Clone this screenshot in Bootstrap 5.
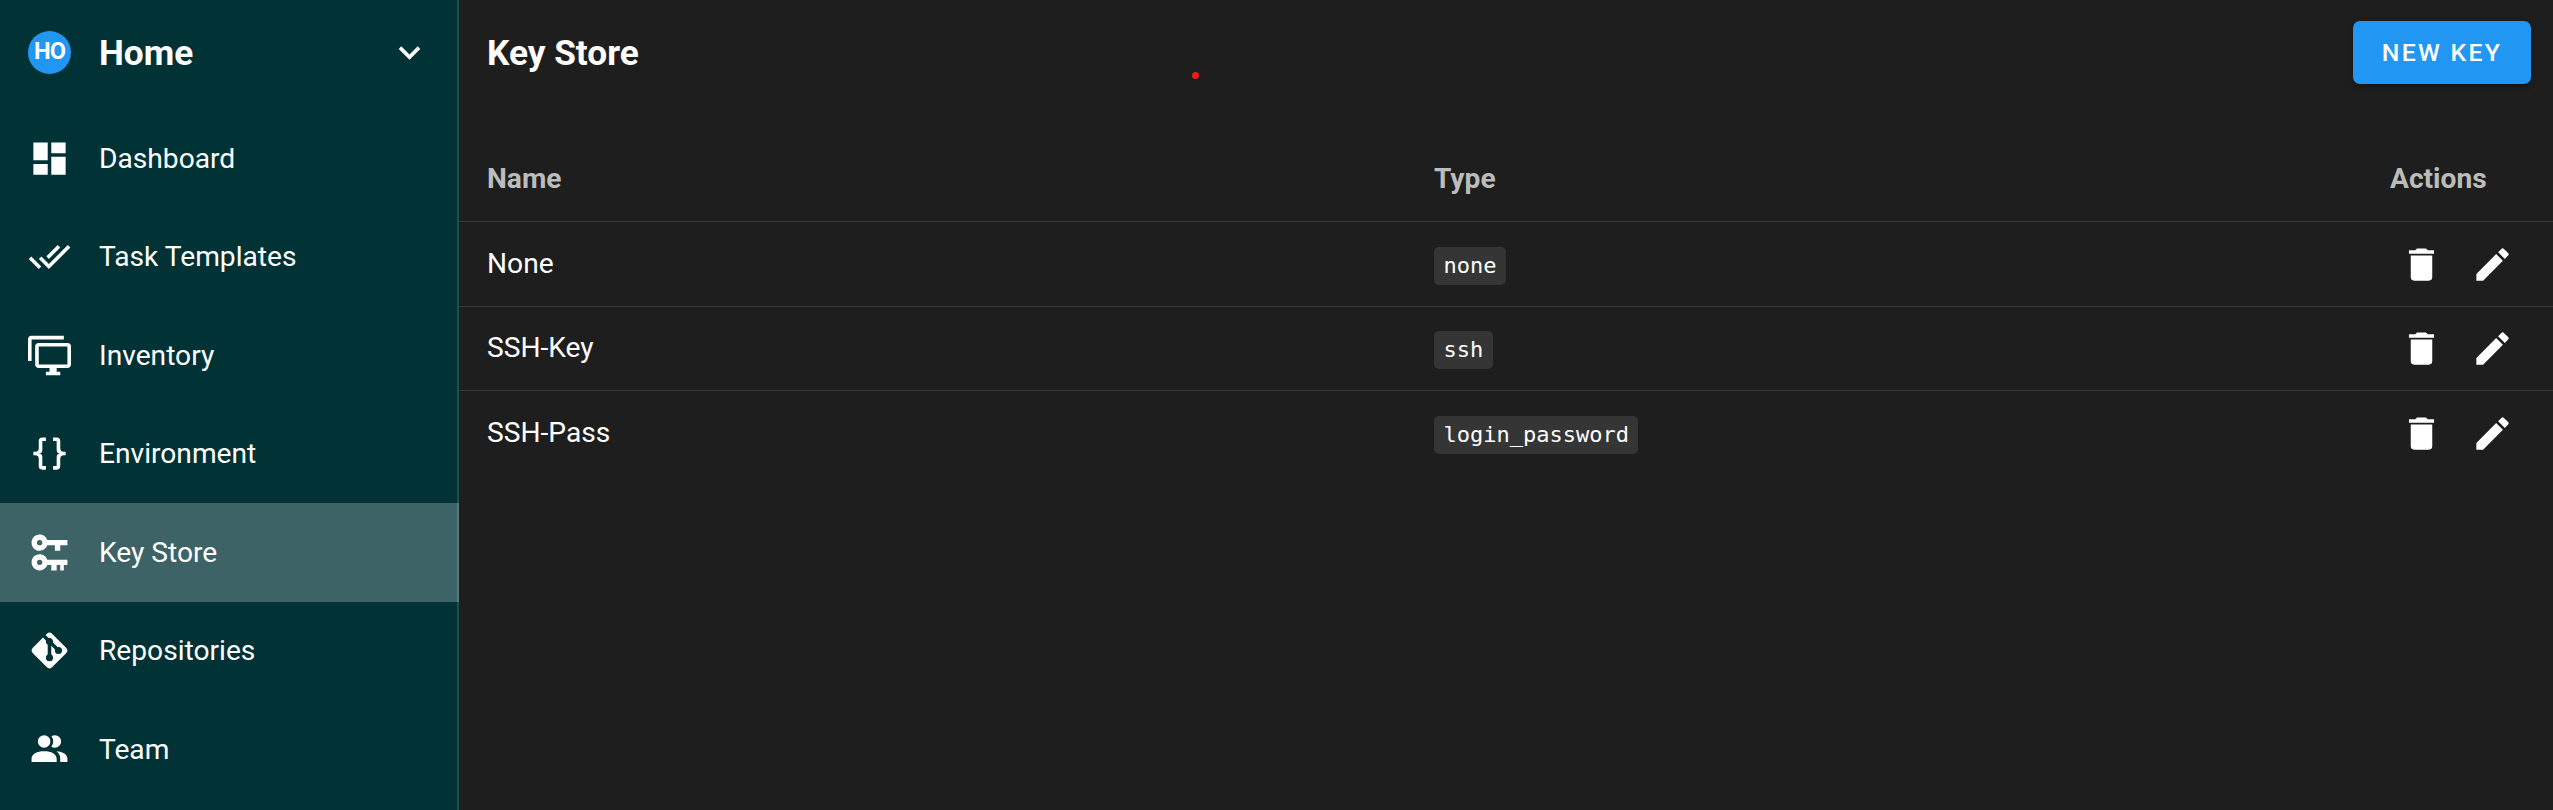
<!DOCTYPE html>
<html lang="en" data-bs-theme="dark">
<head>
<meta charset="utf-8">
<title>Key Store</title>
<meta name="viewport" content="width=device-width, initial-scale=1">
<link rel="stylesheet" href="https://cdn.jsdelivr.net/npm/bootstrap@5.3.0/dist/css/bootstrap.min.css">
<style>
  body { background: #1e1e1e; color: #fff; font-family: Roboto, sans-serif; font-size: 28.16px; line-height: 1.5; }
  svg { width: 43px; height: 43px; fill: currentColor; flex: none; display: block; }
  .side { width: 459px; background: #003236; box-shadow: inset -2px 0 rgba(255,255,255,.13); }
  .project { height: 105px; padding: 0 28px; margin-bottom: 4px; }
  .avatar-dot { width: 43px; height: 43px; background: #2196f3; font-size: 23.5px; font-weight: 700; letter-spacing: -1px; line-height: 1; padding-bottom: 2px; }
  .heading { font-size: 35.2px; font-weight: 700; padding-top: 1px; }
  .side .nav-link { height: 98.5px; padding: 1px 28px 0; gap: 28px; color: #fff; }
  .side .nav-link svg { margin-top: -1px; }
  .side .nav-link.active { background: rgba(255,255,255,.245); }
  .topbar { height: 105px; padding: 0 22px 0 28px; }
  .btn-key { width: 178px; height: 63px; padding: 0; border: 0; border-radius: 7px; background: #2196f3; color: #fff; font-size: 24.8px; font-weight: 500; letter-spacing: 2.3px;
    box-shadow: 0 5px 2px -4px rgba(0,0,0,.2), 0 3px 4px rgba(0,0,0,.14), 0 2px 9px rgba(0,0,0,.12); }
  .btn-key:hover { background: #2196f3; color: #fff; }
  .keys { margin-top: 32px; table-layout: fixed; border-collapse: separate; border-spacing: 0; --bs-table-bg: transparent; --bs-table-color: #fff; }
  .keys > :not(caption) > * > * { height: 85px; padding: 0 28px; border-bottom: 1px solid #393939; color: #fff; vertical-align: middle; }
  .keys > tbody > tr:nth-child(2) > td { height: 84px; }
  .keys > thead > tr > th { color: #bcbcbc; font-weight: 700; }
  .keys > tbody > tr:last-child > td { border-bottom: 0; }
  .keys code { display: block; width: fit-content; height: 38px; margin-top: 3px; padding: 0 9.5px; background: #353535; color: #fff; border-radius: 5px; font: 22px/38px "DejaVu Sans Mono", monospace; }
  .acts { gap: 28px; padding-left: 9.5px; }
  .red-dot { left: 1192px; top: 72px; width: 7px; height: 7px; background: #f01c1c; }
</style>
<script src="https://cdn.jsdelivr.net/npm/bootstrap@5.3.0/dist/js/bootstrap.bundle.min.js"></script>
</head>
<body>
<svg class="d-none">
  <symbol id="trash" viewBox="0 0 24 24"><path d="M19,4H15.5L14.5,3H9.5L8.5,4H5V6H19M6,19A2,2 0 0,0 8,21H16A2,2 0 0,0 18,19V7H6V19Z"/></symbol>
  <symbol id="pencil" viewBox="0 0 24 24"><path d="M20.71,7.04C21.1,6.65 21.1,6 20.71,5.63L18.37,3.29C18,2.9 17.35,2.9 16.96,3.29L15.12,5.12L18.87,8.87M3,17.25V21H6.75L17.81,9.93L14.06,6.18L3,17.25Z"/></symbol>
</svg>
<div class="d-flex vh-100 overflow-hidden">
  <aside class="side flex-shrink-0">
    <div class="project d-flex align-items-center">
      <span class="avatar-dot rounded-circle d-flex align-items-center justify-content-center">HO</span>
      <span class="heading flex-grow-1 ps-4 ms-1">Home</span>
      <svg viewBox="0 0 24 24"><path d="M7.41,8.58L12,13.17L16.59,8.58L18,10L12,16L6,10L7.41,8.58Z"/></svg>
    </div>
    <nav class="nav flex-column flex-nowrap">
      <a class="nav-link d-flex align-items-center" href="#"><svg viewBox="0 0 24 24"><path d="M13,3V9H21V3M13,21H21V11H13M3,21H11V15H3M3,13H11V3H3V13Z"/></svg>Dashboard</a>
      <a class="nav-link d-flex align-items-center" href="#"><svg viewBox="0 0 24 24"><path d="M0.41,13.41L6,19L7.41,17.58L1.83,12M22.24,5.58L11.66,16.17L7.5,12L6.07,13.41L11.66,19L23.66,7M18,7L16.59,5.58L10.24,11.93L11.66,13.34L18,7Z"/></svg>Task Templates</a>
      <a class="nav-link d-flex align-items-center" href="#"><svg viewBox="0 0 24 24"><path d="M22,17V7H6V17H22M22,5A2,2 0 0,1 24,7V17C24,18.11 23.1,19 22,19H16V21H18V23H10V21H12V19H6C4.89,19 4,18.11 4,17V7A2,2 0 0,1 6,5H22M2,3V15H0V3A2,2 0 0,1 2,1H20V3H2Z"/></svg>Inventory</a>
      <a class="nav-link d-flex align-items-center" href="#"><svg viewBox="0 0 24 24"><path d="M8,3A2,2 0 0,0 6,5V9A2,2 0 0,1 4,11H3V13H4A2,2 0 0,1 6,15V19A2,2 0 0,0 8,21H10V19H8V14A2,2 0 0,0 6,12A2,2 0 0,0 8,10V5H10V3M16,3A2,2 0 0,1 18,5V9A2,2 0 0,0 20,11H21V13H20A2,2 0 0,0 18,15V19A2,2 0 0,1 16,21H14V19H16V14A2,2 0 0,1 18,12A2,2 0 0,1 16,10V5H14V3H16Z"/></svg>Environment</a>
      <a class="nav-link active d-flex align-items-center" href="#"><svg viewBox="0 0 24 24"><path d="M6.5,2C8.46,2 10.13,3.25 10.74,5H22V8H18V11H15V8H10.74C10.13,9.75 8.46,11 6.5,11C4,11 2,9 2,6.5C2,4 4,2 6.5,2M6.5,5A1.5,1.5 0 0,0 5,6.5A1.5,1.5 0 0,0 6.5,8A1.5,1.5 0 0,0 8,6.5A1.5,1.5 0 0,0 6.5,5M6.5,13C8.46,13 10.13,14.25 10.74,16H22V19H20V22H18V19H16V22H13V19H10.74C10.13,20.75 8.46,22 6.5,22C4,22 2,20 2,17.5C2,15 4,13 6.5,13M6.5,16A1.5,1.5 0 0,0 5,17.5A1.5,1.5 0 0,0 6.5,19A1.5,1.5 0 0,0 8,17.5A1.5,1.5 0 0,0 6.5,16Z"/></svg>Key Store</a>
      <a class="nav-link d-flex align-items-center" href="#"><svg viewBox="0 0 24 24"><path d="M2.6,10.59L8.38,4.8L10.07,6.5C9.83,7.35 10.22,8.28 11,8.73V14.27C10.4,14.61 10,15.26 10,16A2,2 0 0,0 12,18A2,2 0 0,0 14,16C14,15.26 13.6,14.61 13,14.27V9.41L15.07,11.5C15,11.65 15,11.82 15,12A2,2 0 0,0 17,14A2,2 0 0,0 19,12A2,2 0 0,0 17,10C16.82,10 16.65,10 16.5,10.07L13.93,7.5C14.19,6.57 13.71,5.55 12.78,5.16C12.35,5 11.9,4.96 11.5,5.07L9.8,3.38L10.59,2.6C11.37,1.81 12.63,1.81 13.41,2.6L21.4,10.59C22.19,11.37 22.19,12.63 21.4,13.41L13.41,21.4C12.63,22.19 11.37,22.19 10.59,21.4L2.6,13.41C1.81,12.63 1.81,11.37 2.6,10.59Z"/></svg>Repositories</a>
      <a class="nav-link d-flex align-items-center" href="#"><svg viewBox="0 0 24 24"><path d="M16 17V19H2V17S2 13 9 13 16 17 16 17M12.5 7.5A3.5 3.5 0 1 0 9 11A3.5 3.5 0 0 0 12.5 7.5M15.94 13A5.32 5.32 0 0 1 18 17V19H22V17S22 13.37 15.94 13M15 4A3.39 3.39 0 0 0 13.07 4.59A5 5 0 0 1 13.07 10.41A3.39 3.39 0 0 0 15 11A3.5 3.5 0 0 0 15 4Z"/></svg>Team</a>
    </nav>
  </aside>
  <main class="flex-grow-1">
    <header class="topbar d-flex align-items-center justify-content-between">
      <h1 class="heading m-0">Key Store</h1>
      <button class="btn btn-key" type="button">NEW KEY</button>
    </header>
    <table class="table keys mb-0">
      <colgroup><col style="width:947px"><col><col style="width:191px"></colgroup>
      <thead><tr><th>Name</th><th>Type</th><th>Actions</th></tr></thead>
      <tbody>
        <tr><td>None</td><td><code>none</code></td><td><div class="d-flex acts"><svg><use href="#trash"/></svg><svg><use href="#pencil"/></svg></div></td></tr>
        <tr><td>SSH-Key</td><td><code>ssh</code></td><td><div class="d-flex acts"><svg><use href="#trash"/></svg><svg><use href="#pencil"/></svg></div></td></tr>
        <tr><td>SSH-Pass</td><td><code>login_password</code></td><td><div class="d-flex acts"><svg><use href="#trash"/></svg><svg><use href="#pencil"/></svg></div></td></tr>
      </tbody>
    </table>
  </main>
</div>
<span class="red-dot rounded-circle position-absolute"></span>
</body>
</html>
